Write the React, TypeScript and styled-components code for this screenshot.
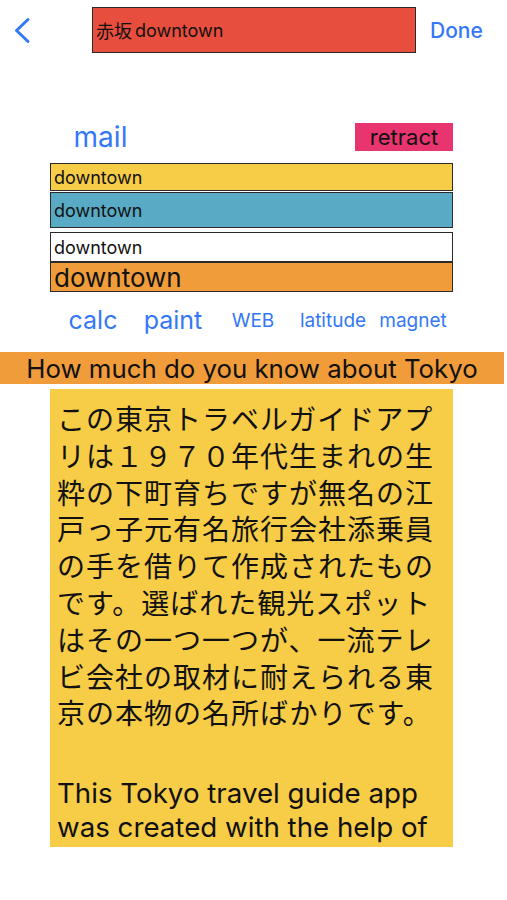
import * as React from 'react';
import styled, { createGlobalStyle } from 'styled-components';

const GlobalStyle = createGlobalStyle`
  html, body {
    margin: 0;
    padding: 0;
    background: #ffffff;
  }
  body {
    font-family: Inter, "Liberation Sans", "Noto Sans CJK JP", sans-serif;
    color: #111111;
  }
`;

const Page = styled.div`
  width: 507px;
  height: 900px;
  overflow: hidden;
  display: flex;
  flex-direction: column;
  background: #ffffff;
`;

const Header = styled.div`
  display: grid;
  grid-template-columns: 92px 324px 1fr;
  align-items: center;
  padding-top: 7px;
`;

const BackButton = styled.div`
  margin-left: 13px;
  display: flex;
  align-items: center;
`;

const TitleField = styled.div`
  box-sizing: border-box;
  height: 46px;
  border: 1px solid #2b2b2b;
  background: #e84e3d;
  display: flex;
  align-items: center;
  padding-left: 3px;
  font-size: 18px;
  font-family: Inter, "Noto Sans CJK JP", sans-serif;

  span {
    margin-right: 3px;
  }
`;

const DoneButton = styled.div`
  padding-left: 14px;
  color: #3478f6;
  font-size: 21px;
  font-weight: 500;
`;

const ActionRow = styled.div`
  margin-top: 70px;
  padding: 0 54px 0 50px;
  display: flex;
  align-items: center;
  height: 28px;
`;

const LinkButton = styled.div<{ $size: number; $width?: number }>`
  width: ${(p) => (p.$width ? `${p.$width}px` : 'auto')};
  flex: ${(p) => (p.$width ? 'none' : '1')};
  text-align: center;
  color: #3478f6;
  font-size: ${(p) => p.$size}px;
  white-space: nowrap;
`;

const RetractButton = styled.div`
  margin-left: auto;
  width: 98px;
  height: 28px;
  background: #e8346f;
  display: flex;
  align-items: center;
  justify-content: center;
  font-size: 22px;
`;

const Fields = styled.div`
  margin: 12px 0 0 50px;
  width: 403px;
  display: flex;
  flex-direction: column;
`;

const Field = styled.div<{ $bg: string; $h: number; $gap: number; $size: number }>`
  box-sizing: border-box;
  height: ${(p) => p.$h}px;
  margin-top: ${(p) => p.$gap}px;
  background: ${(p) => p.$bg};
  border: 1px solid #2b2b2b;
  display: flex;
  align-items: center;
  padding-left: 3px;
  font-size: ${(p) => p.$size}px;
`;

const ToolRow = styled.div`
  margin: 8px 0 0 53px;
  width: 400px;
  height: 40px;
  display: flex;
  align-items: center;
`;

const Banner = styled.div`
  margin-top: 12px;
  width: 504px;
  height: 32px;
  background: #f09c3a;
  display: flex;
  align-items: center;
  justify-content: center;
  font-size: 25.8px;
  white-space: nowrap;
`;

const InfoBox = styled.div`
  margin: 5px 0 0 50px;
  width: 403px;
  height: 458px;
  box-sizing: border-box;
  padding: 11px 7px 0 7px;
  background: #f7cc46;
  overflow: hidden;
`;

const JapaneseText = styled.p`
  margin: 0;
  font-family: "Noto Sans CJK JP", sans-serif;
  font-size: 28px;
  letter-spacing: 1px;
  line-height: 36.8px;
`;

const EnglishText = styled.p`
  margin: 45px 0 0 0;
  font-size: 27.7px;
  line-height: 34px;
`;

const Chevron = () => (
  <svg width="18" height="27" viewBox="0 0 18 27">
    <polyline
      points="15,2.5 3.5,13.5 15,24.5"
      fill="none"
      stroke="#3478f6"
      strokeWidth="3"
      strokeLinecap="round"
      strokeLinejoin="round"
    />
  </svg>
);

const fields = [
  { bg: '#f7cc46', h: 28, gap: 0, size: 18 },
  { bg: '#59aac5', h: 36, gap: 1, size: 18 },
  { bg: '#ffffff', h: 30, gap: 4, size: 18 },
  { bg: '#f09c3a', h: 30, gap: 0, size: 26 },
];

const tools = [
  { label: 'calc', size: 25 },
  { label: 'paint', size: 25 },
  { label: 'WEB', size: 19 },
  { label: 'latitude', size: 19 },
  { label: 'magnet', size: 19 },
];

const App = () => (
  <Page>
    <GlobalStyle />
    <Header>
      <BackButton>
        <Chevron />
      </BackButton>
      <TitleField>
        <span>赤坂</span>downtown
      </TitleField>
      <DoneButton>Done</DoneButton>
    </Header>

    <ActionRow>
      <LinkButton $size={28} $width={101}>
        mail
      </LinkButton>
      <RetractButton>retract</RetractButton>
    </ActionRow>

    <Fields>
      {fields.map((f, i) => (
        <Field key={i} $bg={f.bg} $h={f.h} $gap={f.gap} $size={f.size}>
          downtown
        </Field>
      ))}
    </Fields>

    <ToolRow>
      {tools.map((t) => (
        <LinkButton key={t.label} $size={t.size}>
          {t.label}
        </LinkButton>
      ))}
    </ToolRow>

    <Banner>How much do you know about Tokyo</Banner>

    <InfoBox>
      <JapaneseText>
        この東京トラベルガイドアプリは１９７０年代生まれの生粋の下町育ちですが無名の江戸っ子元有名旅行会社添乗員の手を借りて作成されたものです。選ばれた観光スポットはその一つ一つが、一流テレビ会社の取材に耐えられる東京の本物の名所ばかりです。
      </JapaneseText>
      <EnglishText>This Tokyo travel guide app was created with the help of</EnglishText>
    </InfoBox>
  </Page>
);

export default App;
